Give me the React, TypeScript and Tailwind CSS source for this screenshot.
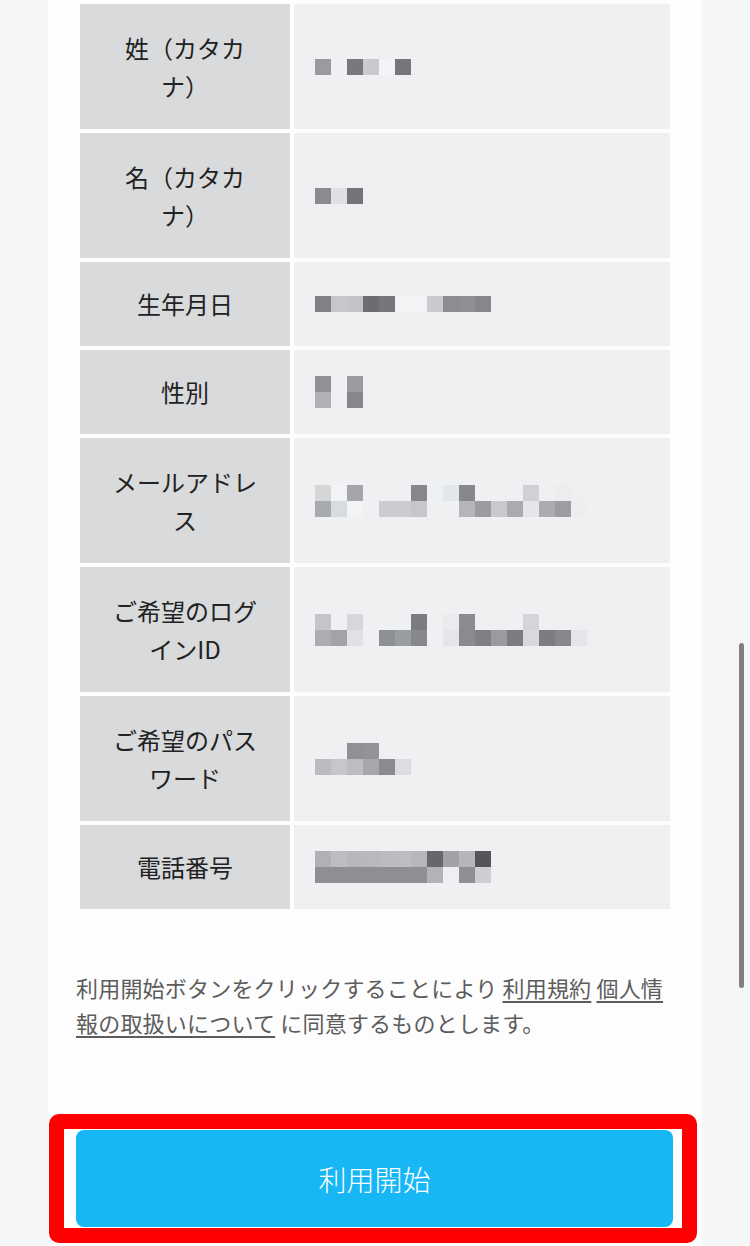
const jp = { fontFamily: '"Noto Sans CJK JP", "Noto Sans", sans-serif' };

type Row = { label: string; blocks: string[][] };

const rows: Row[] = [
    {
        label: '姓（カタカナ）',
        blocks: [['#9a9ba0', '', '#77787c', '#c9cacd', '#f3f4f5', '#75767b']],
    },
    {
        label: '名（カタカナ）',
        blocks: [['#8a8b90', '#dfe0e2', '#73757b']],
    },
    {
        label: '生年月日',
        blocks: [['#808185', '#c6c7ca', '#c3c4c7', '#6c6d73', '#76777d', '#f2f3f5', '#f2f3f5', '#c9cacd', '#8c8d91', '#8f9094', '#86878c']],
    },
    {
        label: '性別',
        blocks: [
            ['#909196', '', '#9b9c9f'],
            ['#b0b1b4', '', '#86878b'],
        ],
    },
    {
        label: 'メールアドレス',
        blocks: [
            ['#d5d6d8', '#f2f3f4', '#a4a6ab', '', '', '', '#86878b', '', '#e4e7ea', '#86888d', '', '', '', '#d0d1d4', '', '#ecedef', '#eeeff1'],
            ['#a9aaae', '#d9dcdf', '#f3f4f5', '', '#cbcccf', '#cbcccf', '#c6c7ca', '', '', '#b4b5b9', '#9b9ca0', '#c8c9cc', '#a9abae', '#e5e6e8', '#abacb0', '#9c9da1', '#eceef0'],
        ],
    },
    {
        label: 'ご希望のログインID',
        blocks: [
            ['#c4c5c8', '', '#d5d7da', '', '', '', '#7b7c80', '', '#eaebed', '#8b8c90', '', '', '', '#d4d5d8', '', '', '#eeeff1'],
            ['#acadb1', '#a2a3a7', '#e0e1e4', '', '#8e9095', '#9a9da0', '#86888c', '', '#e3e5e8', '#8a8b8f', '#7f8085', '#9a9b9f', '#7a7c82', '#d7d9dc', '#7b7d82', '#86888c', '#e5e6e9', '#eeeff1'],
        ],
    },
    {
        label: 'ご希望のパスワード',
        blocks: [
            ['', '', '#909195', '#939498'],
            ['#bbbcbf', '#c6c7ca', '#bcbdc0', '#a6a7ab', '#8a8b8f', '#dcdde0'],
        ],
    },
    {
        label: '電話番号',
        blocks: [
            ['#b0b1b4', '#bcbdc0', '#b7b8bb', '#b8b9bc', '#bbbcbf', '#bcbdc0', '#b6b7ba', '#66676c', '#a1a2a6', '#b5b6b9', '#54555a'],
            ['#8e8f93', '#8e8f93', '#8e8f93', '#8e8f93', '#8e8f93', '#8e8f93', '#8f9094', '#b2b3b6', '#eeeff1', '#8f9094', '#cdced1'],
        ],
    },
];

// blurred-out user value, drawn as mosaic squares
function Mosaic({ lines }: { lines: string[][] }) {
    return (
        <div className="flex flex-col">
            {lines.map((line, i) => (
                <div key={i} className="flex">
                    {line.map((c, j) => (
                        <span key={j} className="w-4 h-4 block" style={{ backgroundColor: c || 'transparent' }} />
                    ))}
                </div>
            ))}
        </div>
    );
}

export default function App() {
    return (
        <div className="relative w-[750px] h-[1246px] overflow-hidden bg-[#f5f6f8]" style={jp}>
            <div className="ml-[48px] w-[654px] h-full bg-[#fdfdfd] pt-[4px]">
                {/* Form table */}
                <div className="mx-[32px] grid grid-cols-[210px_376px] grid-rows-[125px_125px_84px_84px_125px_125px_125px_84px] gap-[4px]">
                    {rows.map((row) => (
                        <div key={row.label} className="contents">
                            <div className="bg-[#d9dadc] px-[28px] flex items-center justify-center text-center text-[24px] leading-[38px] text-[#222222]">
                                {row.label}
                            </div>
                            <div className="bg-[#eff0f2] pl-[21px] flex items-center">
                                <Mosaic lines={row.blocks} />
                            </div>
                        </div>
                    ))}
                </div>

                {/* Consent */}
                <p className="mt-[61px] px-[28px] text-[22px] leading-[35px] tracking-[0.2px] text-[#5c5c5c]">
                    利用開始ボタンをクリックすることにより <span className="underline underline-offset-4">利用規約</span>{' '}
                    <span className="underline underline-offset-4">個人情報の取扱いについて</span> に同意するものとします。
                </p>

                {/* Submit */}
                <div className="mt-[74px] ml-[1px] w-[648px] border-[15px] border-[#ff0000] rounded-[10px] bg-white pt-[1px] pb-[1px] pl-[12px] pr-[9px]">
                    <button className="w-full h-[97px] rounded-[8px] bg-[#17b6f4] text-white text-[28px] font-light">
                        利用開始
                    </button>
                </div>
            </div>

            {/* overlay scrollbar */}
            <div className="absolute left-[739px] top-[643px] w-[5px] h-[345px] rounded-full bg-[#808080]" />
        </div>
    );
}
